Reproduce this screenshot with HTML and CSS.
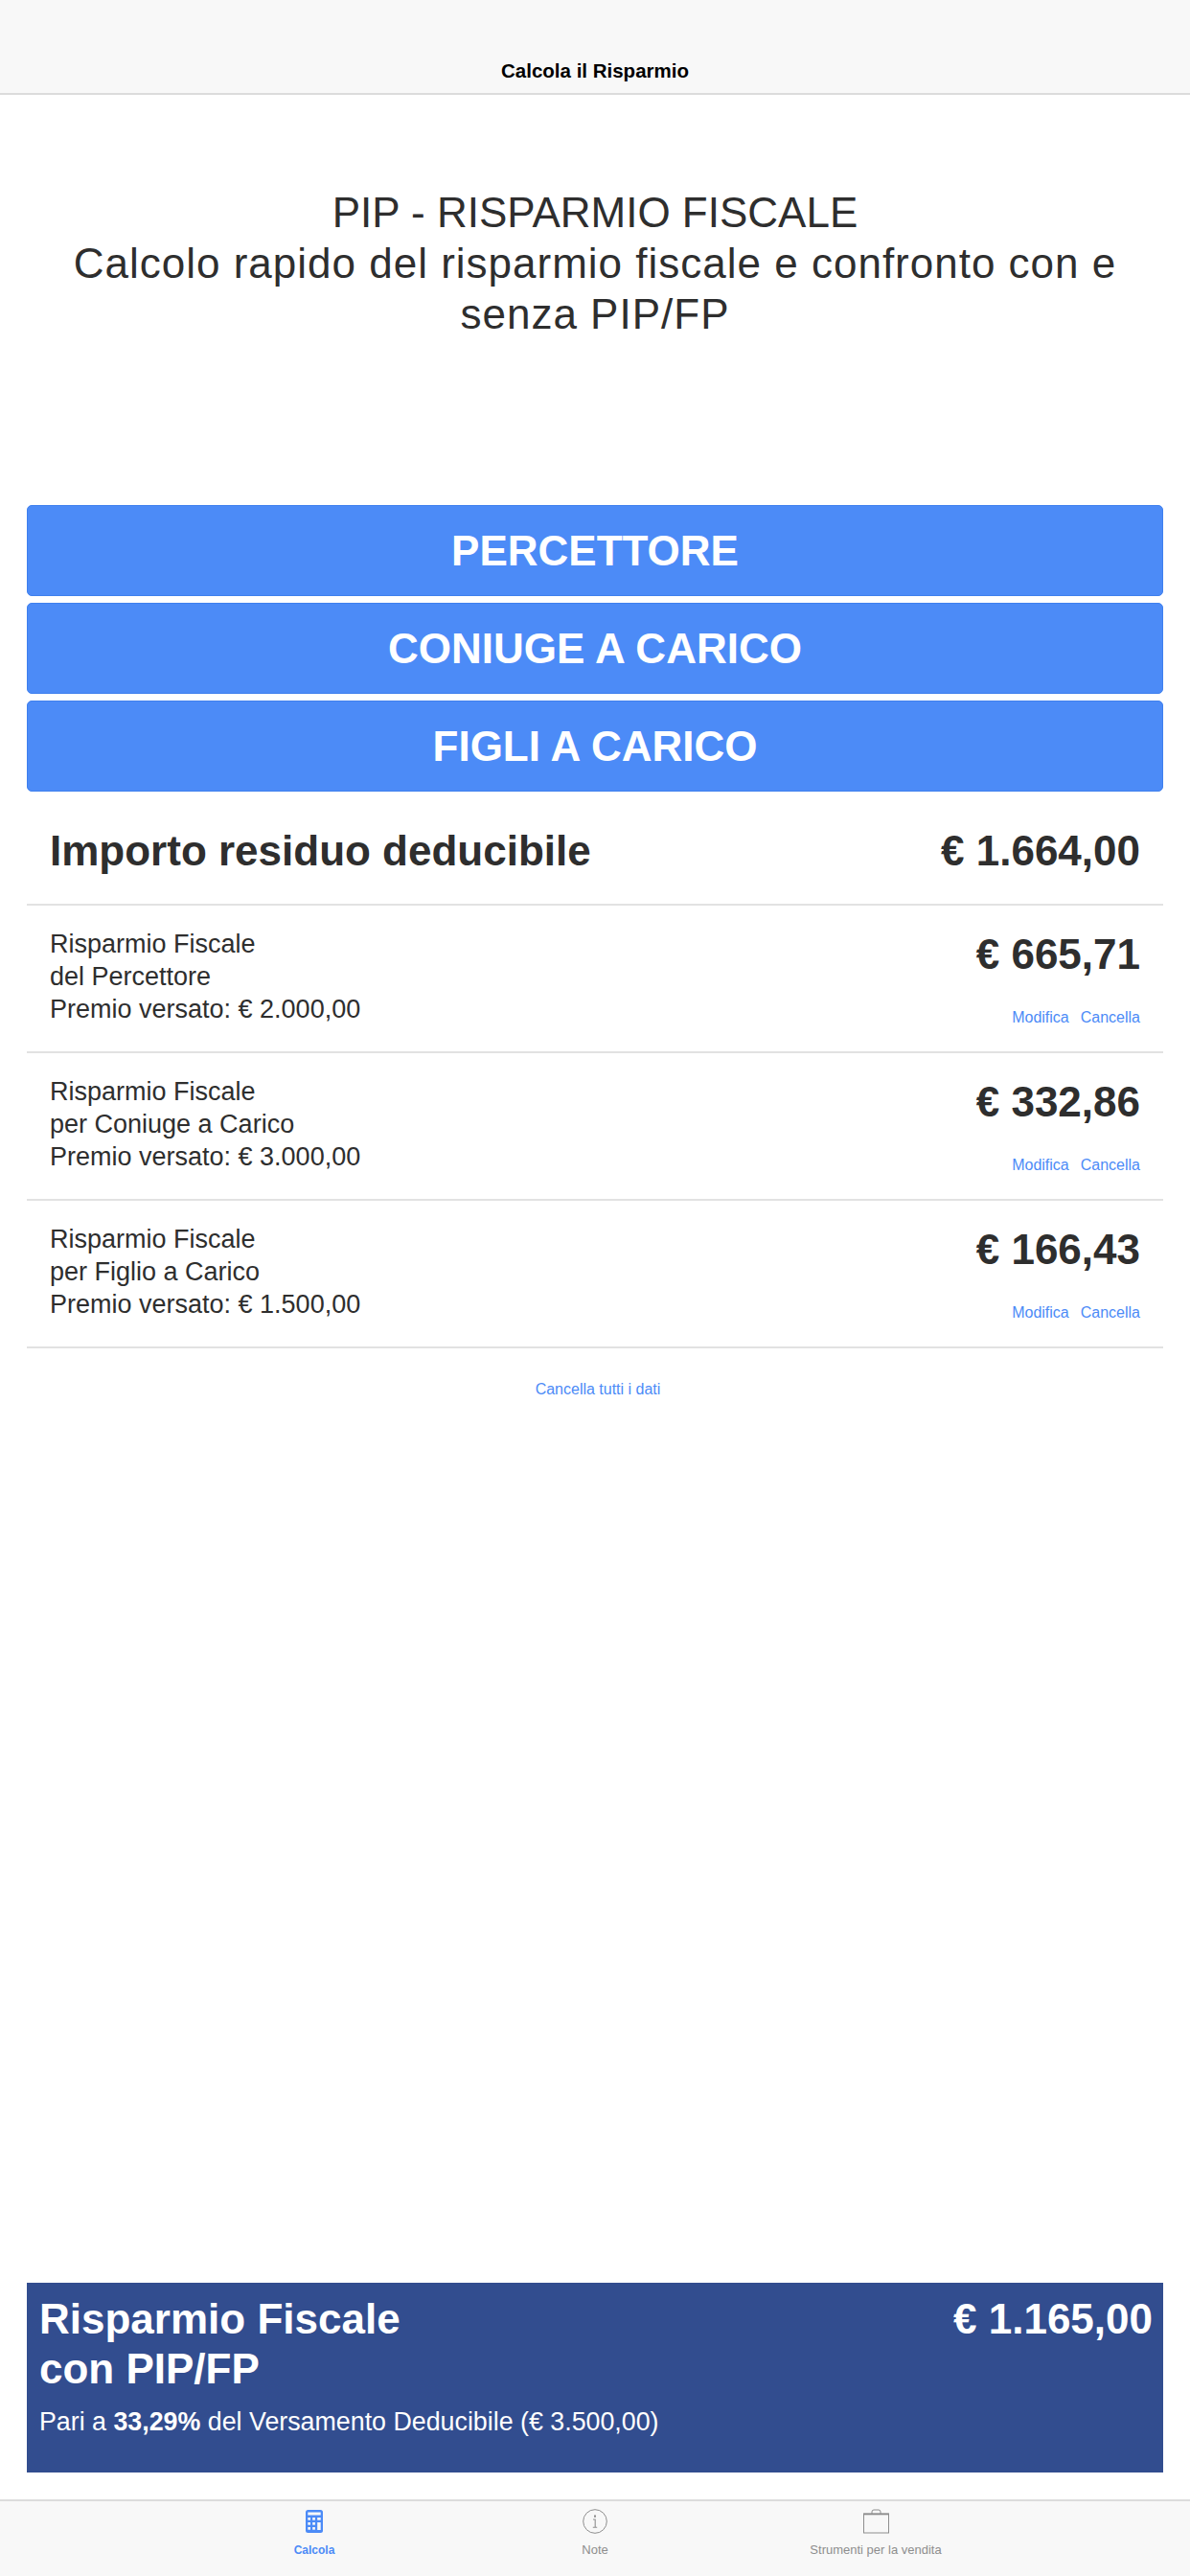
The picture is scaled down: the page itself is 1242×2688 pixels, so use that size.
FILE: index.html
```html
<!DOCTYPE html>
<html lang="en">
<head>
    <meta charset="UTF-8">
    <title>Calcola il Risparmio</title>
    <link rel="stylesheet" href="styles.css">
</head>
<body>
    <header class="navbar">Calcola il Risparmio</header>
    <main class="content">
        <h1 class="title">PIP - RISPARMIO FISCALE<br><span class="subtitle">Calcolo rapido del risparmio fiscale e confronto con e senza PIP/FP</span></h1>
        <div class="buttons">
            <button class="big-button">PERCETTORE</button>
            <button class="big-button">CONIUGE A CARICO</button>
            <button class="big-button">FIGLI A CARICO</button>
        </div>
        <div class="summary-row">
            <span>Importo residuo deducibile</span>
            <span>€ 1.664,00</span>
        </div>
        <div class="row">
            <p class="row-text">Risparmio Fiscale<br>del Percettore<br>Premio versato: € 2.000,00</p>
            <div class="row-right">
                <div class="row-amount">€ 665,71</div>
                <div class="row-links"><a>Modifica</a><a>Cancella</a></div>
            </div>
        </div>
        <div class="row">
            <p class="row-text">Risparmio Fiscale<br>per Coniuge a Carico<br>Premio versato: € 3.000,00</p>
            <div class="row-right">
                <div class="row-amount">€ 332,86</div>
                <div class="row-links"><a>Modifica</a><a>Cancella</a></div>
            </div>
        </div>
        <div class="row">
            <p class="row-text">Risparmio Fiscale<br>per Figlio a Carico<br>Premio versato: € 1.500,00</p>
            <div class="row-right">
                <div class="row-amount">€ 166,43</div>
                <div class="row-links"><a>Modifica</a><a>Cancella</a></div>
            </div>
        </div>
        <a class="clear-all">Cancella tutti i dati</a>
        <div class="total">
            <div class="total-top">
                <div class="total-label">Risparmio Fiscale<br>con PIP/FP</div>
                <div class="total-amount">€ 1.165,00</div>
            </div>
            <p class="total-note">Pari a <b>33,29%</b> del Versamento Deducibile (€ 3.500,00)</p>
        </div>
    </main>
    <nav class="tabbar">
        <div class="tab tab-active">
            <svg width="18" height="26" viewBox="0 0 18 26">
                <rect y="1" width="18" height="24" rx="2.5" fill="#4c8bf7"/>
                <g fill="#f8f8f8">
                    <rect x="2.3" y="3.5" width="13.4" height="3"/>
                    <rect x="2.3" y="9" width="2.7" height="2.7"/><rect x="7.2" y="9" width="2.7" height="2.7"/><rect x="12.2" y="9" width="3.5" height="2.7"/>
                    <rect x="2.3" y="14" width="2.7" height="2.7"/><rect x="7.2" y="14" width="2.7" height="2.7"/>
                    <rect x="2.3" y="19" width="2.7" height="2.7"/><rect x="7.2" y="19" width="2.7" height="2.7"/>
                    <rect x="12.2" y="14" width="3.5" height="8"/>
                </g>
            </svg>
            <span>Calcola</span>
        </div>
        <div class="tab">
            <svg width="26" height="26" viewBox="0 0 26 26">
                <circle cx="13" cy="13" r="12.3" fill="none" stroke="#8e8e8e" stroke-width="1"/>
                <rect x="12" y="6.5" width="2" height="2.2" fill="#8e8e8e"/>
                <path d="M11 11h2.2v8M10.8 19.2h4.4" fill="none" stroke="#8e8e8e" stroke-width="1.1"/>
            </svg>
            <span>Note</span>
        </div>
        <div class="tab">
            <svg width="27" height="26" viewBox="0 0 27 26">
                <rect x="0.5" y="5" width="26" height="20" fill="none" stroke="#8e8e8e" stroke-width="1"/>
                <path d="M0 5.5h27" stroke="#8e8e8e" stroke-width="1.6"/>
                <path d="M9 5V3q0-2 2-2h5q2 0 2 2v2" fill="none" stroke="#8e8e8e" stroke-width="1"/>
            </svg>
            <span>Strumenti per la vendita</span>
        </div>
    </nav>
</body>
</html>
```
FILE: styles.css
```css
html, body {
    margin: 0;
    padding: 0;
}
body {
    width: 1242px;
    height: 2688px;
    display: flex;
    flex-direction: column;
    font-family: "Liberation Sans", Arial, sans-serif;
    color: #2e2e2e;
    background-color: #fff;
}
.navbar {
    height: 97px;
    background-color: #f8f8f8;
    border-bottom: 2px solid #dcdcdc;
    display: flex;
    justify-content: center;
    align-items: flex-end;
    font-size: 20.5px;
    font-weight: bold;
    line-height: 46px;
    color: #000;
}
.content {
    flex: 1;
    padding: 0 28px;
    display: flex;
    flex-direction: column;
}
.title {
    margin: 96px 0 0;
    height: 332px;
    padding: 0 20px;
    font-size: 44px;
    font-weight: normal;
    line-height: 53px;
    text-align: center;
}
.subtitle {
    letter-spacing: 1px;
}
.buttons {
    display: flex;
    flex-direction: column;
    gap: 7px;
}
.big-button {
    height: 95px;
    padding: 0;
    border: 1px solid #3f80ee;
    border-radius: 5px;
    background-color: #4c8bf7;
    color: #fff;
    font-family: inherit;
    font-size: 44px;
    font-weight: bold;
}
.summary-row {
    height: 111px;
    padding: 6px 24px 0;
    display: flex;
    justify-content: space-between;
    align-items: center;
    font-size: 44px;
    font-weight: bold;
    border-bottom: 2px solid #e2e2e2;
}
.row {
    height: 152px;
    padding: 0 24px;
    display: flex;
    justify-content: space-between;
    border-bottom: 2px solid #e2e2e2;
}
.row-text {
    margin: 23px 0 0;
    font-size: 27px;
    line-height: 34px;
}
.row-right {
    text-align: right;
}
.row-amount {
    margin-top: 26px;
    font-size: 44px;
    font-weight: bold;
    line-height: 50px;
}
.row-links {
    margin-top: 31px;
    font-size: 16px;
    line-height: 20px;
}
.row-links a {
    margin-left: 12px;
    color: #4c8bf7;
}
.clear-all {
    margin-top: 33px;
    padding-left: 6px;
    font-size: 16px;
    line-height: 20px;
    text-align: center;
    color: #4c8bf7;
}
.total {
    margin-top: auto;
    margin-bottom: 28px;
    height: 198px;
    padding: 12px 11px 0 13px;
    box-sizing: border-box;
    background-color: #324d8f;
    color: #fff;
}
.total-top {
    display: flex;
    justify-content: space-between;
}
.total-label {
    font-size: 44px;
    font-weight: bold;
    line-height: 52px;
}
.total-amount {
    font-size: 44px;
    font-weight: bold;
    line-height: 52px;
}
.total-note {
    margin: 12px 0 0;
    font-size: 26.8px;
    line-height: 34px;
}
.tabbar {
    height: 78px;
    background-color: #f8f8f8;
    border-top: 2px solid #dcdcdc;
    display: flex;
    justify-content: center;
}
.tab {
    width: 293px;
    display: flex;
    flex-direction: column;
    align-items: center;
    font-size: 13px;
    color: #8e8e8e;
}
.tab svg {
    margin-top: 8px;
}
.tab span {
    margin-top: 10px;
    line-height: 14px;
}
.tab-active {
    font-weight: bold;
    font-size: 12px;
    color: #4c8bf7;
}
```
